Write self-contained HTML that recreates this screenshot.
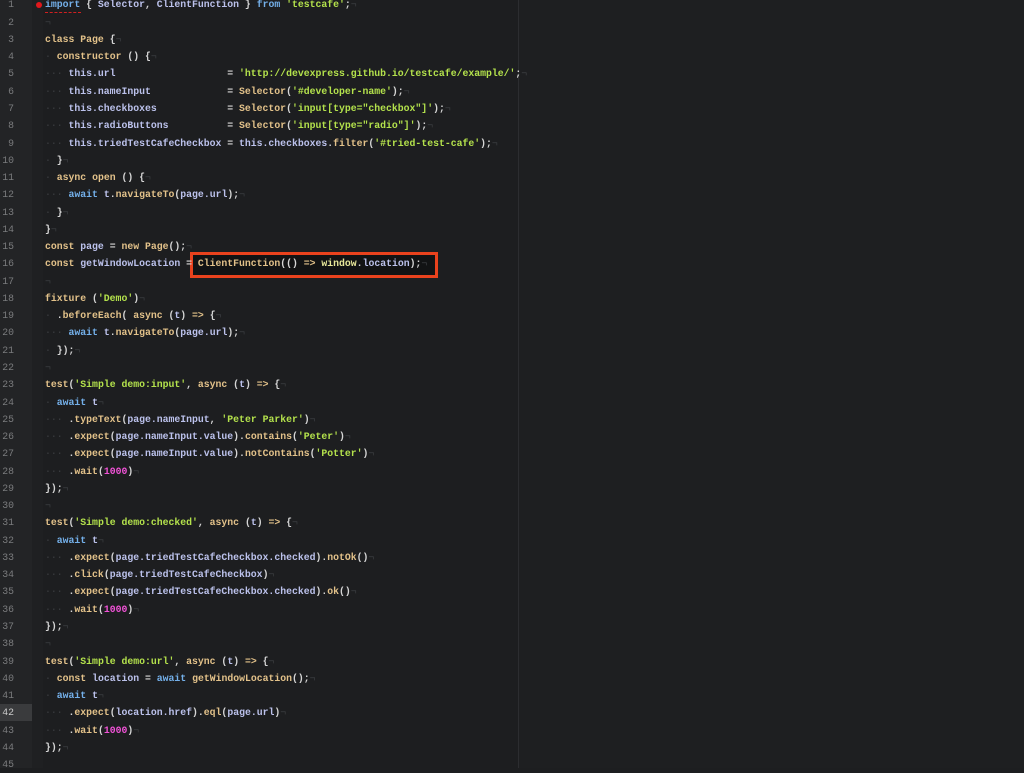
<!DOCTYPE html>
<html><head><meta charset="utf-8"><style>
html,body{margin:0;padding:0;width:1024px;height:768px;overflow:hidden;background:#1d1e20;}
#g{position:absolute;left:0;top:0;width:43px;height:768px;background:#232426;}
#g2{position:absolute;left:32px;top:0;width:11px;height:768px;background:#1f2022;}
#cl{position:absolute;left:0;top:704px;width:32px;height:17px;background:#3a3b3d;}
#m{position:absolute;left:518px;top:0;width:1px;height:768px;background:#2c2d30;}
#r{position:absolute;left:519px;top:0;right:0;height:768px;background:#1e1f21;}
.num{position:absolute;left:0;top:-3.6px;width:14px;text-align:right;font:9.8px/17.26px "Liberation Mono",monospace;color:#7a7b7d;}
pre{position:absolute;left:45px;top:-3.6px;margin:0;font:bold 9.8px/17.26px "Liberation Mono",monospace;color:#d6d6d6;}
.t{color:#e3c28a}.v{color:#bcc2ec}.b{color:#74b0ea}.s{color:#b4e24c}.n{color:#f253d8}.d{color:#3d3f42;font-weight:normal}
#hb{position:absolute;left:190px;top:252px;width:242px;height:20px;border:3px solid #e9421d;background:#121314;}
#dot{position:absolute;left:36px;top:2px;width:6px;height:6px;border-radius:3px;background:#e0181c;}
#sq{position:absolute;left:45px;top:12px;width:36px;border-top:1px dashed #d02020;}
</style></head><body>
<div id="g"></div><div id="g2"></div><div id="cl"></div><div id="r"></div><div id="m"></div>
<div class="num">1<br>2<br>3<br>4<br>5<br>6<br>7<br>8<br>9<br>10<br>11<br>12<br>13<br>14<br>15<br>16<br>17<br>18<br>19<br>20<br>21<br>22<br>23<br>24<br>25<br>26<br>27<br>28<br>29<br>30<br>31<br>32<br>33<br>34<br>35<br>36<br>37<br>38<br>39<br>40<br>41<br><span style="color:#ccc">42</span><br>43<br>44<br>45</div>
<div id="hb"></div>
<div id="dot"></div><div id="sq"></div>
<pre><span class="b">import</span> { <span class="v">Selector</span>, <span class="v">ClientFunction</span> } <span class="b">from</span> <span class="s">'testcafe'</span>;<span class="d">¬</span>
<span class="d">¬</span>
<span class="t">class</span> <span class="t">Page</span> {<span class="d">¬</span>
<span class="d">·</span> <span class="t">constructor</span> () {<span class="d">¬</span>
<span class="d">···</span> <span class="v">this.url</span>                   = <span class="s">'http://devexpress.github.io/testcafe/example/'</span>;<span class="d">¬</span>
<span class="d">···</span> <span class="v">this.nameInput</span>             = <span class="t">Selector</span>(<span class="s">'#developer-name'</span>);<span class="d">¬</span>
<span class="d">···</span> <span class="v">this.checkboxes</span>            = <span class="t">Selector</span>(<span class="s">'input[type="checkbox"]'</span>);<span class="d">¬</span>
<span class="d">···</span> <span class="v">this.radioButtons</span>          = <span class="t">Selector</span>(<span class="s">'input[type="radio"]'</span>);<span class="d">¬</span>
<span class="d">···</span> <span class="v">this.triedTestCafeCheckbox</span> = <span class="v">this.checkboxes</span>.<span class="t">filter</span>(<span class="s">'#tried-test-cafe'</span>);<span class="d">¬</span>
<span class="d">·</span> }<span class="d">¬</span>
<span class="d">·</span> <span class="t">async</span> <span class="t">open</span> () {<span class="d">¬</span>
<span class="d">···</span> <span class="b">await</span> <span class="v">t</span>.<span class="t">navigateTo</span>(<span class="v">page.url</span>);<span class="d">¬</span>
<span class="d">·</span> }<span class="d">¬</span>
}<span class="d">¬</span>
<span class="t">const</span> <span class="v">page</span> = <span class="t">new</span> <span class="t">Page</span>();<span class="d">¬</span>
<span class="t">const</span> <span class="v">getWindowLocation</span> = <span class="t">ClientFunction</span>(() <span class="t">=&gt;</span> <span style="color:#e8e89a">window</span>.<span class="v">location</span>);<span class="d">¬</span>
<span class="d">¬</span>
<span class="t">fixture</span> (<span class="s">'Demo'</span>)<span class="d">¬</span>
<span class="d">·</span> .<span class="t">beforeEach</span>( <span class="t">async</span> (<span class="v">t</span>) <span class="t">=&gt;</span> {<span class="d">¬</span>
<span class="d">···</span> <span class="b">await</span> <span class="v">t</span>.<span class="t">navigateTo</span>(<span class="v">page.url</span>);<span class="d">¬</span>
<span class="d">·</span> });<span class="d">¬</span>
<span class="d">¬</span>
<span class="t">test</span>(<span class="s">'Simple demo:input'</span>, <span class="t">async</span> (<span class="v">t</span>) <span class="t">=&gt;</span> {<span class="d">¬</span>
<span class="d">·</span> <span class="b">await</span> <span class="v">t</span><span class="d">¬</span>
<span class="d">···</span> .<span class="t">typeText</span>(<span class="v">page.nameInput</span>, <span class="s">'Peter Parker'</span>)<span class="d">¬</span>
<span class="d">···</span> .<span class="t">expect</span>(<span class="v">page.nameInput.value</span>).<span class="t">contains</span>(<span class="s">'Peter'</span>)<span class="d">¬</span>
<span class="d">···</span> .<span class="t">expect</span>(<span class="v">page.nameInput.value</span>).<span class="t">notContains</span>(<span class="s">'Potter'</span>)<span class="d">¬</span>
<span class="d">···</span> .<span class="t">wait</span>(<span class="n">1000</span>)<span class="d">¬</span>
});<span class="d">¬</span>
<span class="d">¬</span>
<span class="t">test</span>(<span class="s">'Simple demo:checked'</span>, <span class="t">async</span> (<span class="v">t</span>) <span class="t">=&gt;</span> {<span class="d">¬</span>
<span class="d">·</span> <span class="b">await</span> <span class="v">t</span><span class="d">¬</span>
<span class="d">···</span> .<span class="t">expect</span>(<span class="v">page.triedTestCafeCheckbox.checked</span>).<span class="t">notOk</span>()<span class="d">¬</span>
<span class="d">···</span> .<span class="t">click</span>(<span class="v">page.triedTestCafeCheckbox</span>)<span class="d">¬</span>
<span class="d">···</span> .<span class="t">expect</span>(<span class="v">page.triedTestCafeCheckbox.checked</span>).<span class="t">ok</span>()<span class="d">¬</span>
<span class="d">···</span> .<span class="t">wait</span>(<span class="n">1000</span>)<span class="d">¬</span>
});<span class="d">¬</span>
<span class="d">¬</span>
<span class="t">test</span>(<span class="s">'Simple demo:url'</span>, <span class="t">async</span> (<span class="v">t</span>) <span class="t">=&gt;</span> {<span class="d">¬</span>
<span class="d">·</span> <span class="t">const</span> <span class="v">location</span> = <span class="b">await</span> <span class="t">getWindowLocation</span>();<span class="d">¬</span>
<span class="d">·</span> <span class="b">await</span> <span class="v">t</span><span class="d">¬</span>
<span class="d">···</span> .<span class="t">expect</span>(<span class="v">location.href</span>).<span class="t">eql</span>(<span class="v">page.url</span>)<span class="d">¬</span>
<span class="d">···</span> .<span class="t">wait</span>(<span class="n">1000</span>)<span class="d">¬</span>
});<span class="d">¬</span>
</pre>
</body></html>
